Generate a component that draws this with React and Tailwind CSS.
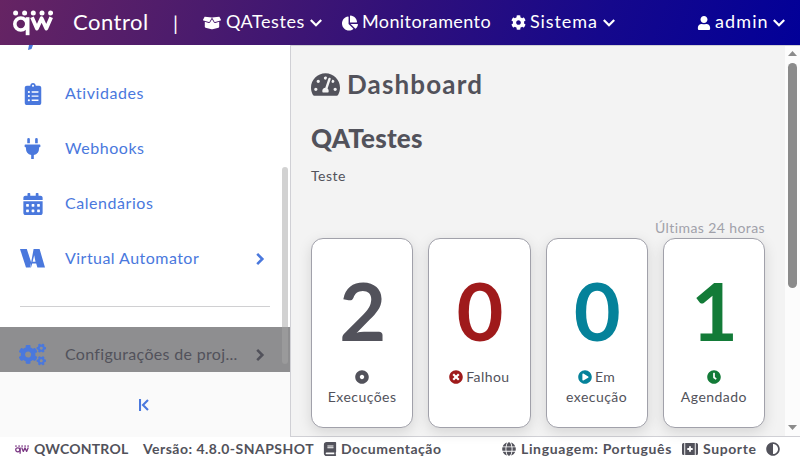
import { FaBoxOpen, FaChartPie, FaCog, FaUser, FaClipboardList, FaPlug, FaCalendarAlt, FaCogs, FaTachometerAlt, FaBook, FaGlobe, FaAdjust, FaDotCircle, FaTimesCircle, FaPlayCircle, FaClock } from 'react-icons/fa';

function Chevron({ className, right }) {
  return (
    <svg viewBox="0 0 12 12" className={className} fill="none" stroke="currentColor" strokeWidth="2.2">
      <path d={right ? 'M3.6 1.6 8 6 3.6 10.4' : 'M.8 3 6 8.2 11.2 3'} />
    </svg>
  );
}

function Logo({ className }) {
  return (
    <svg viewBox="0 0 40 26" className={className} fill="none" stroke="currentColor">
      <g fill="currentColor" stroke="none">
        {[2.6, 11.6, 20.3, 29, 37.6].map((x) => (
          <circle key={x} cx={x} cy="2.9" r="2.5" />
        ))}
      </g>
      <circle cx="7.8" cy="14" r="6" strokeWidth="3.6" />
      <path d="M14.6 7.2V25.2" strokeWidth="3.8" />
      <path d="M19 7.2 23.9 18.5 28.6 8.2 33.3 18.5 38.2 7.2" strokeWidth="3.8" strokeLinejoin="round" />
    </svg>
  );
}

function VaIcon() {
  return (
    <svg viewBox="0 0 25 19" className="h-[19px] w-[25px]" fill="currentColor">
      <path d="M0 0h6.8L11.2 13.6 9.8 18.6H6Z" />
      <path d="M13.6 0h6L25 18.6h-7.6l-1.2-4h-4l-1.2 4h-.8Zm.6 6.2-1.6 6.6h2.9Z" fillRule="evenodd" />
    </svg>
  );
}

function SupportIcon() {
  return (
    <svg viewBox="0 0 16 12" className="h-3 w-4 shrink-0" fill="currentColor">
      <path d="M1.5 0H2.3V12H1.5Q0 12 0 10.5V1.5Q0 0 1.5 0ZM13.7 0h.8Q16 0 16 1.5v9q0 1.5-1.5 1.5h-.8Z" />
      <path d="M3.2 0h9.6v12H3.2ZM7.1 3.3v1.8H5.3v1.8h1.8v1.8h1.8V6.9h1.8V5.1H8.9V3.3Z" fillRule="evenodd" />
    </svg>
  );
}

function Item({ icon, label, arrow, tracking }) {
  return (
    <div className="flex h-[55px] items-center pl-5 text-[#4a78dd]">
      <span className="flex w-[25px] justify-center">{icon}</span>
      <span className={`ml-5 flex-1 pb-0.5 text-base ${tracking}`}>{label}</span>
      {arrow && <Chevron right className="mr-[23px] size-3.5" />}
    </div>
  );
}

function Card({ value, color, icon, label, twoLines }) {
  return (
    <div className="flex h-[190px] flex-1 flex-col items-center rounded-xl border border-[#a1a1aa] bg-white shadow-[0_4px_14px_rgba(0,0,0,0.13)]">
      <div className={`mt-[21px] h-[100px] pl-px text-[81px] leading-[100px] font-bold ${color}`}>{value}</div>
      <div className="mt-[7px] text-center text-sm leading-5 tracking-[0.45px]">
        <div className="flex h-5 items-center justify-center gap-[3px]">
          <span className={color}>{icon}</span>
          {label}
        </div>
        <div>{twoLines}</div>
      </div>
    </div>
  );
}

export default function App() {
  return (
    <div className="flex h-[461px] w-[800px] flex-col overflow-hidden bg-white font-['Lato',sans-serif] text-[#52525b]">
      <header className="flex h-[45px] shrink-0 items-center bg-linear-[110deg,#662463_0%,#4b1b6d_25%,#30107a_50%,#15088c_75%,#020098_100%] text-[18px] tracking-[0.4px] text-white">
        <Logo className="ml-[13px] h-[26px] w-10" />
        <span className="ml-5 w-[80px] pb-0.5 text-[22px] tracking-[0.5px]">Control</span>
        <span className="ml-[20px] w-[22px] text-[20px]">|</span>
        <span className="ml-[8px] flex w-[119px] items-center">
          <FaBoxOpen className="mr-[5px] size-[18px]" />
          <span className="flex-1 pb-0.5 tracking-[0.55px]">QATestes</span>
          <Chevron className="size-3" />
        </span>
        <span className="ml-5 flex w-[149px] items-center gap-1">
          <FaChartPie className="size-4" />
          <span className="pb-0.5">Monitoramento</span>
        </span>
        <span className="ml-5 flex w-[104px] items-center">
          <FaCog className="mr-1 size-[15px]" />
          <span className="flex-1 pb-0.5 tracking-[0.9px]">Sistema</span>
          <Chevron className="size-3" />
        </span>
        <span className="mr-[15px] ml-auto flex w-[88px] items-center">
          <FaUser className="mr-1 size-[14px]" />
          <span className="flex-1 pb-0.5 tracking-[1.1px]">admin</span>
          <Chevron className="size-3" />
        </span>
      </header>

      <div className="flex h-[392px] shrink-0">
        <aside className="flex w-[290px] shrink-0 flex-col">
          <div className="relative h-[327px] overflow-hidden">
            <div className="h-[21px] pl-7 text-[#4a78dd]">
              <svg viewBox="0 0 5 5" className="h-[5px] w-[5px]" fill="currentColor">
                <path d="M1 0h4L3.5 4 0 5Z" />
              </svg>
            </div>
            <Item icon={<FaClipboardList className="size-[22px]" />} label="Atividades" tracking="tracking-[0.58px]" />
            <Item icon={<FaPlug className="size-[21px]" />} label="Webhooks" tracking="tracking-[0.55px]" />
            <Item icon={<FaCalendarAlt className="size-[22px]" />} label="Calendários" tracking="tracking-[0.55px]" />
            <Item icon={<VaIcon />} label="Virtual Automator" tracking="tracking-[0.46px]" arrow />
            <div className="mx-5 mt-5 border-t border-[#d0d0d2]" />
            <div className="mt-5 flex h-[55px] items-center bg-[#8e8e90] pl-[19px]">
              <FaCogs className="size-[27px] text-[#4a78dd]" />
              <span className="ml-[19px] flex-1 pb-0.5 text-base tracking-[0.32px]">Configurações de proj...</span>
              <Chevron right className="mr-[23px] size-3.5" />
            </div>
            <div className="absolute top-[122px] right-[2px] h-[197px] w-1.5 rounded-full bg-[#a5a5a5]/50" />
          </div>
          <div className="flex flex-1 items-center justify-center bg-[#fafafa] pr-0.5 text-[#4a78dd]">
            <svg viewBox="0 0 10 12" className="h-3 w-2.5" fill="none" stroke="currentColor" strokeWidth="2.1">
              <path d="M1 0v12M9 1 4 6 9 11" />
            </svg>
          </div>
        </aside>

        <main className="flex flex-1 border-y border-l border-[#d0d0d5] bg-[#f3f3f3]">
          <div className="w-[494px] px-5 pt-[22px]">
            <h1 className="flex h-8 items-center text-[26px] font-bold tracking-[1.15px]">
              <FaTachometerAlt className="mr-[7px] size-[29px]" />
              Dashboard
            </h1>
            <h2 className="mt-[22px] h-8 text-[26px] leading-8 font-black tracking-[0.2px]">QATestes</h2>
            <p className="mt-[12px] text-sm leading-5 tracking-[0.5px]">Teste</p>
            <p className="mt-8 h-5 text-right text-sm leading-5 tracking-[0.4px] text-[#a1a1aa]">Últimas 24 horas</p>
            <div className="flex w-[454px] gap-[15px]">
              <Card value="2" color="text-[#52525b]" icon={<FaDotCircle />} twoLines="Execuções" />
              <Card value="0" color="text-[#9f1a1b]" icon={<FaTimesCircle />} label="Falhou" />
              <Card value="0" color="text-[#05829a]" icon={<FaPlayCircle />} label="Em" twoLines="execução" />
              <Card value="1" color="text-[#137b38]" icon={<FaClock />} twoLines="Agendado" />
            </div>
          </div>
          <div className="flex flex-1 flex-col items-center bg-[#fcfcfc]">
            <svg viewBox="0 0 9 5" className="mt-[5px] h-[5px] w-[9px]" fill="#8b8b8b"><path d="M4.5 0 9 5H0Z" /></svg>
            <div className="mt-[7px] h-[225px] w-[9px] rounded-full bg-[#8b8b8b]" />
            <svg viewBox="0 0 9 5" className="mt-auto mb-[6px] h-[5px] w-[9px]" fill="#8b8b8b"><path d="M0 0H9L4.5 5Z" /></svg>
          </div>
        </main>
      </div>

      <footer className="flex h-6 items-center text-sm font-bold whitespace-nowrap">
        <Logo className="ml-[15px] h-[9px] w-3.5 text-[#7c3a85]" />
        <span className="ml-[5px] w-[109px] tracking-[0.2px]">QWCONTROL</span>
        <span className="w-[180px] tracking-[0.48px]">Versão: 4.8.0-SNAPSHOT</span>
        <FaBook className="size-3.5" />
        <span className="ml-1 w-[161px] tracking-[0.5px]">Documentação</span>
        <FaGlobe className="size-3.5" />
        <span className="ml-[5px] w-[161px] tracking-[0.64px]">Linguagem: Português</span>
        <SupportIcon />
        <span className="ml-[5px] w-[63px] tracking-[0.6px]">Suporte</span>
        <FaAdjust className="size-3.5" />
      </footer>
    </div>
  );
}
